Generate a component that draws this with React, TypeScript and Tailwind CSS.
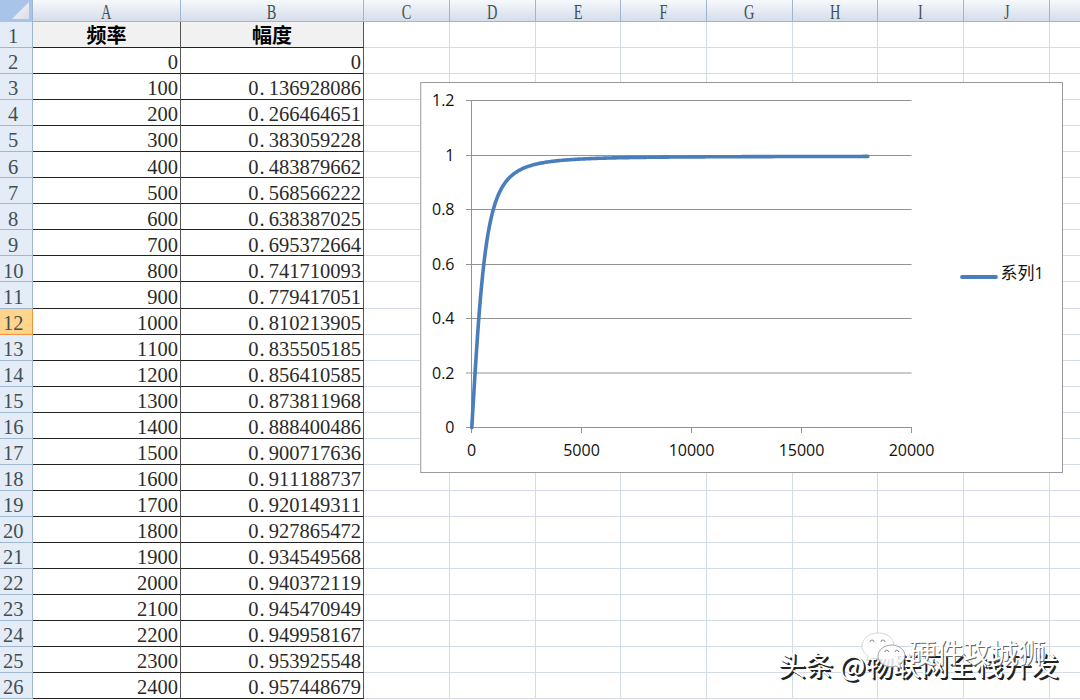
import React from 'react';

const CUTOFF = 723.43;

const amplitudes = [
  '0', '0.136928086', '0.266464651', '0.383059228', '0.483879662',
  '0.568566222', '0.638387025', '0.695372664', '0.741710093', '0.779417051',
  '0.810213905', '0.835505185', '0.856410585', '0.873811968', '0.888400486',
  '0.900717636', '0.911188737', '0.920149311', '0.927865472', '0.934549568',
  '0.940372119', '0.945470949', '0.949958167', '0.953925548', '0.957448679',
];

const rows = [
  { a: '频率', b: '幅度' },
  ...amplitudes.map((value, i) => ({ a: String(i * 100), b: value })),
];

const columns = [
  { name: 'A', width: 'w-[148px]' },
  { name: 'B', width: 'w-[183px]' },
  { name: 'C', width: 'w-[86px]' },
  { name: 'D', width: 'w-[86px]' },
  { name: 'E', width: 'w-[85px]' },
  { name: 'F', width: 'w-[86px]' },
  { name: 'G', width: 'w-[86px]' },
  { name: 'H', width: 'w-[85px]' },
  { name: 'I', width: 'w-[86px]' },
  { name: 'J', width: 'w-[86px]' },
  { name: '', width: 'w-[40px]' },
];

// The decimal point takes a full digit slot, like every other character
const CellNumber: React.FC<{ value: string }> = ({ value }) => {
  const [whole, fraction] = value.split('.');
  return (
    <span className="text-[20.5px] leading-none">
      {whole}
      {fraction && <span className="inline-block w-[10.25px] pl-px">.</span>}
      {fraction}
    </span>
  );
};

const HeaderRow: React.FC = () => (
  <div className="flex h-[22px] shrink-0 bg-gradient-to-b from-[#f6f9fc] to-[#d4dcea]">
    <div className="flex w-[33px] shrink-0 items-end justify-end border-r border-[#9eb6ce] bg-[#a9c4e9] pr-[3px] pb-[3px]">
      <svg width="17" height="17" viewBox="0 0 17 17">
        <defs>
          <linearGradient id="corner" x1="0" y1="0" x2="1" y2="1">
            <stop offset="0" stopColor="#f7f9fc" />
            <stop offset="1" stopColor="#d9dde6" />
          </linearGradient>
        </defs>
        <path d="M17 0V17H0Z" fill="url(#corner)" />
      </svg>
    </div>
    {columns.map((col) => (
      <div
        key={col.name}
        className={`${col.width} flex shrink-0 items-center justify-center border-r border-b border-r-[#9eb6ce] border-b-[#9eb6ce] pt-[2px] text-[20px] leading-none text-[#405055]`}
      >
        <span className="inline-block scale-x-[0.72]">{col.name}</span>
      </div>
    ))}
  </div>
);

const Chart: React.FC = () => {
  const points: string[] = [];
  for (let f = 0; f <= 18000; f += 50) {
    const gain = f / Math.sqrt(f * f + CUTOFF * CUTOFF);
    points.push(`${(51.8 + f * 0.022).toFixed(2)},${(345.7 - gain * 271.5).toFixed(2)}`);
  }
  const yTicks = [
    { label: '1.2', y: 18.5 },
    { label: '1', y: 73.5 },
    { label: '0.8', y: 127.5 },
    { label: '0.6', y: 182.5 },
    { label: '0.4', y: 236.5 },
    { label: '0.2', y: 291 },
    { label: '0', y: 345.5 },
  ];
  const xTicks = [0, 5000, 10000, 15000, 20000];

  return (
    <svg
      className="absolute top-[82px] left-[420px] bg-white"
      width="643"
      height="391"
      viewBox="0 0 643 391"
      fontFamily="'Open Sans', 'Noto Sans', sans-serif"
      fontSize="16"
      fill="#111"
    >
      <rect x="0.75" y="0.5" width="641.75" height="390" fill="none" stroke="#9a9a9a" />
      {yTicks.map((t) => (
        <g key={t.label}>
          <line x1="46" x2="491.5" y1={t.y} y2={t.y} stroke="#939393" />
          <text x="34.5" y={t.y + 5.5} textAnchor="end">{t.label}</text>
        </g>
      ))}
      <line x1="51.5" x2="51.5" y1="18" y2="351" stroke="#939393" />
      {xTicks.map((v) => (
        <g key={v}>
          <line x1={51.5 + v * 0.022} x2={51.5 + v * 0.022} y1="345" y2="351" stroke="#939393" />
          <text x={51.5 + v * 0.022} y="373.5" textAnchor="middle">{v}</text>
        </g>
      ))}
      <polyline
        points={points.join(' ')}
        fill="none"
        stroke="#4a7ebb"
        strokeWidth="3.6"
        strokeLinejoin="round"
        strokeLinecap="round"
      />
      <line x1="542" x2="576" y1="195" y2="195" stroke="#4a7ebb" strokeWidth="3.8" strokeLinecap="round" />
      <text x="580.5" y="196.5" fontFamily="'Open Sans', 'Noto Sans CJK SC', sans-serif" fontSize="17">
        系列<tspan fontSize="16">1</tspan>
      </text>
    </svg>
  );
};

const Watermark: React.FC = () => (
  <div className="absolute top-[628px] left-[778px] h-[62px] w-[300px] font-['Noto_Sans_CJK_SC',sans-serif] whitespace-nowrap">
    <div className="absolute top-[18px] left-0 text-[27.6px] leading-[36px] text-white [text-shadow:1px_1px_0_#222,2px_2px_0_#222]">
      头条 @物联网全栈开发
    </div>
    <svg className="absolute top-[4px] left-[83px]" width="46" height="40" viewBox="0 0 46 40">
      <path d="M17 1C8 1 1 7 1 14c0 4 2 7 6 10l-1 5 6-3c8 2 21 0 21-12C33 6 26 1 17 1Z" fill="#fff" stroke="#ccc" strokeWidth="0.8" />
      <path d="M31 13c-8 0-14 5-14 11s6 11 14 11l4-1 5 3-1-5c3-2 5-5 5-8 0-6-6-11-13-11Z" fill="#fff" fillOpacity="0.85" stroke="#999" strokeWidth="0.9" />
      <g fill="none" stroke="#888">
        <path d="M9 10a2 2 0 0 1 4 0" />
        <path d="M20 10a2 2 0 0 1 4 0" />
        <path d="M24 20a1.8 1.8 0 0 1 3.6 0" />
        <path d="M34 20a1.8 1.8 0 0 1 3.6 0" />
      </g>
    </svg>
    <div className="absolute top-[4px] left-[131px] text-[27.3px] leading-[38px] text-white [text-shadow:1px_1px_0_#666]">
      硬件攻城狮
    </div>
  </div>
);

const App: React.FC = () => {
  return (
    <div className="relative flex h-[700px] w-[1080px] flex-col overflow-hidden bg-white font-['Liberation_Serif','Noto_Sans_CJK_SC',serif] text-[#2a2a2a] [font-kerning:none]">
      <HeaderRow />

      {rows.map((row, i) => (
        <div key={i} className="flex h-[26.05px] shrink-0">
          <div
            className={`flex w-[33px] shrink-0 items-center border-r border-b pt-[4px] text-[20.5px] leading-none text-[#405055] ${
              i === 11 ? 'border-[#f29536] bg-[#ffd58d]' : 'border-[#9eb6ce] bg-[#e4ecf7]'
            } ${i < 9 ? 'pl-2' : 'pl-[3px]'}`}
          >
            {i + 1}
          </div>
          {columns.map((col, c) => {
            if (c > 1) {
              return <div key={col.name} className={`${col.width} shrink-0 border-r border-b border-[#d3dae8]`} />;
            }
            const value = c === 0 ? row.a : row.b;
            return (
              <div
                key={col.name}
                className={`${col.width} flex shrink-0 items-center border-r border-b border-r-[#555] border-b-[#222] ${
                  i === 0 ? 'justify-center bg-[#f1f1f1] pt-[2px]' : 'justify-end pt-[4px] pr-[2px]'
                }`}
              >
                {i === 0 ? (
                  <span className="text-[20px] leading-none font-semibold text-black">{value}</span>
                ) : (
                  <CellNumber value={value} />
                )}
              </div>
            );
          })}
        </div>
      ))}

      <Chart />
      <Watermark />
    </div>
  );
};

export default App;
